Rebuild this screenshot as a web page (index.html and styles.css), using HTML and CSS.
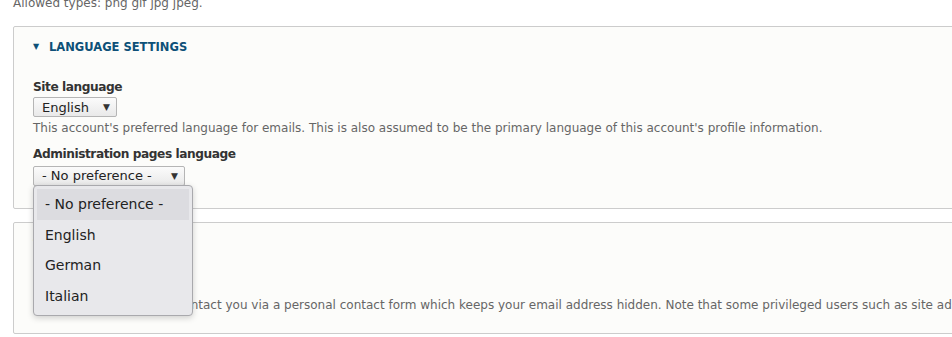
FILE: index.html
```html
<!DOCTYPE html>
<html>
<head>
<meta charset="utf-8">
<link rel="stylesheet" href="styles.css">
</head>
<body>
<div class="page">
  <div class="desc top-desc">Allowed types: png gif jpg jpeg.</div>

  <div class="box box-lang">
    <div class="legend"><span class="tri">▼</span>LANGUAGE SETTINGS</div>

    <div class="item item-site">
      <div class="label">Site language</div>
      <div class="select select-site"><span class="val">English</span><span class="arrow">▼</span></div>
      <div class="desc">This account's preferred language for emails. This is also assumed to be the primary language of this account's profile information.</div>
    </div>

    <div class="item item-admin">
      <div class="label">Administration pages language</div>
      <div class="select-wrap">
        <div class="select select-admin"><span class="val">- No preference -</span><span class="arrow">▼</span></div>
        <ul class="popup">
          <li class="opt active">- No preference -</li>
          <li class="opt">English</li>
          <li class="opt">German</li>
          <li class="opt">Italian</li>
        </ul>
      </div>
    </div>
  </div>

  <div class="box box-contact">
    <div class="legend"><span class="tri">▼</span>CONTACT SETTINGS</div>
    <div class="desc contact-desc">Allow other users to contact you via a personal contact form which keeps your email address hidden. Note that some privileged users such as site administrators are still able to contact you even if you choose to disable this feature.</div>
  </div>
</div>
</body>
</html>
```

FILE: styles.css
```css
html, body {
  margin: 0;
  padding: 0;
  background: #ffffff;
  overflow: hidden;
}

body {
  font-family: "DejaVu Sans", Verdana, sans-serif;
  color: #333333;
  width: 952px;
  height: 337px;
}

.page {
  padding: 0 0 0 13px;
}

.desc {
  font-size: 12px;
  line-height: 16px;
  color: #666666;
  white-space: nowrap;
}

.top-desc {
  margin-top: -5px;
  height: 15px;
}

.box {
  background: #fcfcfa;
  border: 1px solid #cccccc;
  border-radius: 2px;
  margin-right: -30px;
  padding: 0 0 0 19px;
}

.box-lang {
  margin-top: 16px;
  height: 181px;
}

.box-contact {
  margin-top: 13px;
  height: 110px;
}

.legend {
  margin-top: 10px;
  height: 20px;
  line-height: 20px;
  font-size: 11.5px;
  font-weight: bold;
  color: #0d5078;
}

.tri {
  display: inline-block;
  font-size: 8px;
  width: 16px;
  vertical-align: top;
  line-height: 20px;
}

.item-site {
  margin-top: 21px;
}

.item-admin {
  margin-top: 9px;
}

.label {
  font-size: 12.2px;
  letter-spacing: -0.45px;
  font-weight: bold;
  line-height: 18px;
  color: #333333;
}

.select-wrap {
  position: relative;
  margin-top: 2px;
}

.select {
  display: inline-flex;
  align-items: center;
  box-sizing: border-box;
  height: 20px;
  border: 1px solid #b5b5b5;
  border-radius: 2px;
  background: linear-gradient(#fbfbfb, #e9e9e9);
  font-size: 13px;
  color: #222222;
  padding: 0 6px 0 8px;
}

.select-site {
  margin-top: 1px;
  margin-bottom: 3px;
  width: 84px;
}

.select-admin {
  width: 152px;
}

.select .val {
  flex: 1;
  white-space: nowrap;
}

.select .arrow {
  font-size: 9px;
  color: #333333;
}

.popup {
  position: absolute;
  top: 20px;
  left: 0;
  width: 160px;
  box-sizing: border-box;
  margin: 0;
  padding: 3px 3px 4px;
  list-style: none;
  background: #e8e8eb;
  border: 1px solid #a9a9ad;
  border-radius: 4px;
  box-shadow: 0 2px 6px rgba(0, 0, 0, 0.18);
}

.opt {
  height: 30.5px;
  line-height: 30.5px;
  font-size: 14px;
  color: #222222;
  padding-left: 8px;
  white-space: nowrap;
}

.opt.active {
  background: #dcdce0;
}

.contact-desc {
  margin-top: 44px;
  padding-left: 20px;
}
```
